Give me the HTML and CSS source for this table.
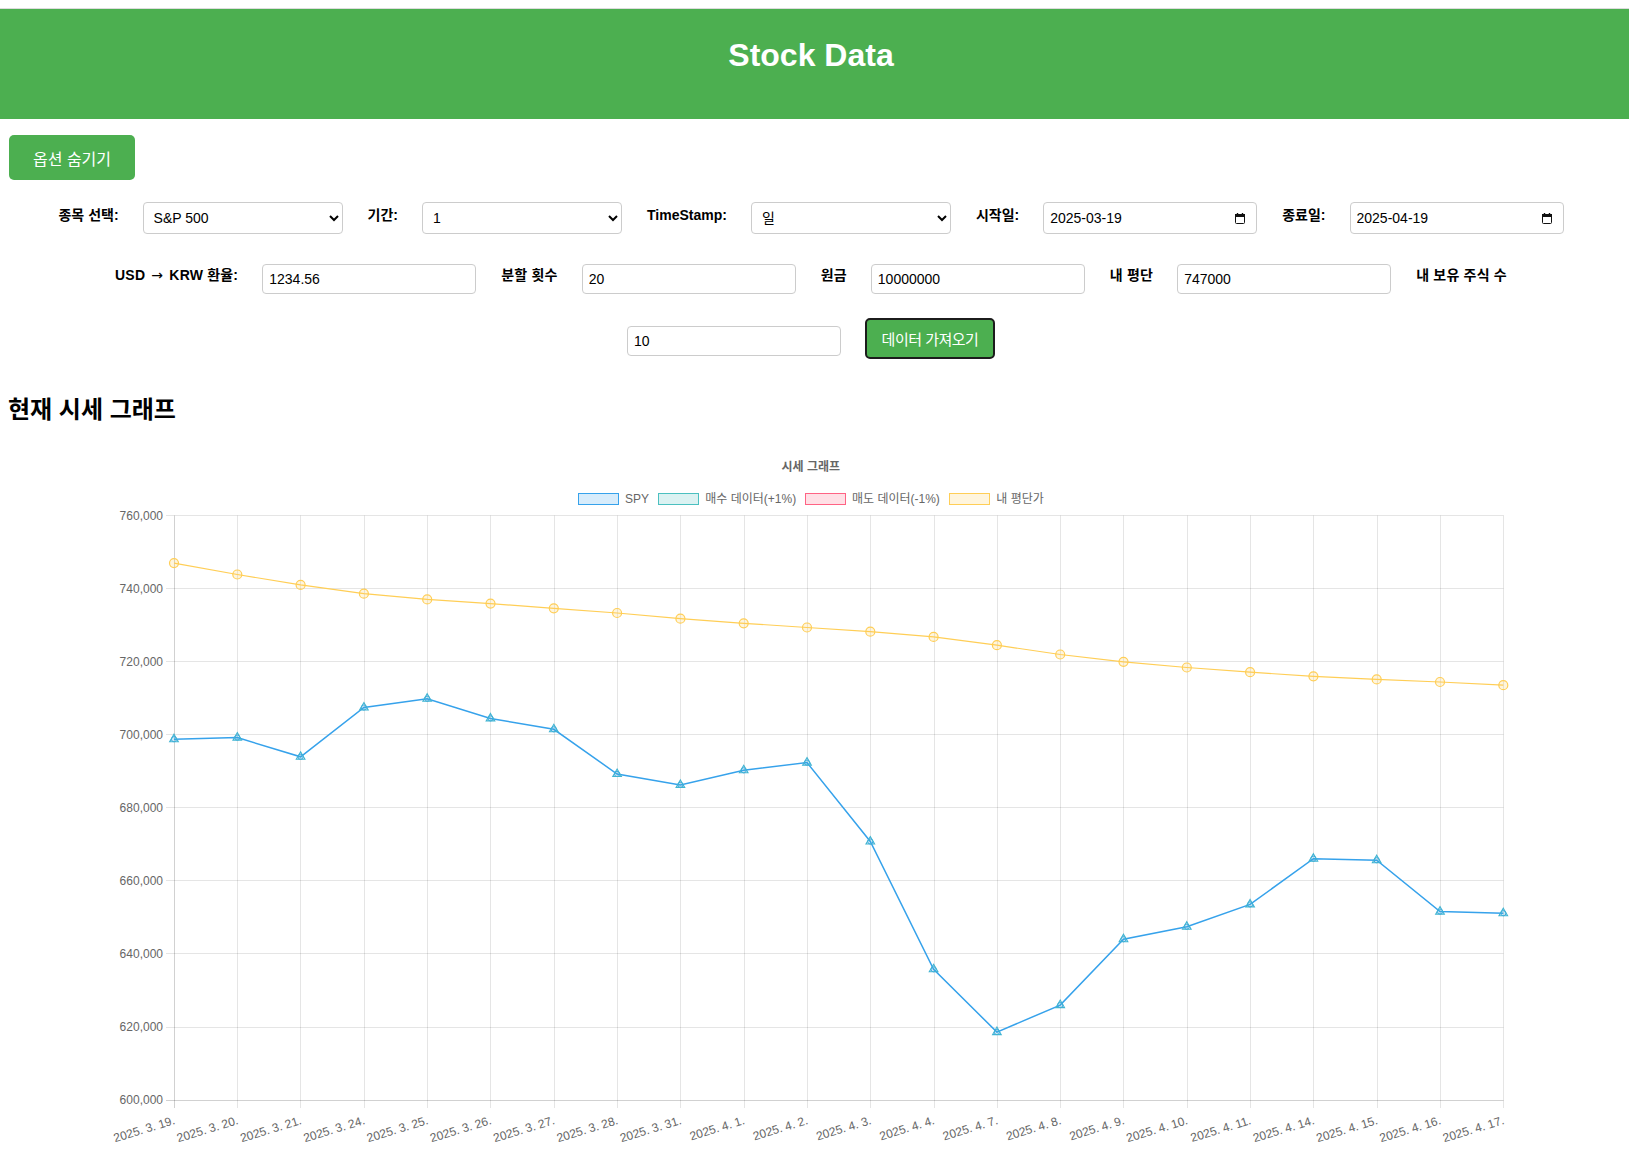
FILE: index.html
```html
<!DOCTYPE html>
<html lang="ko">
<head>
<meta charset="utf-8">
<title>Stock Data</title>
<link rel="stylesheet" href="styles.css">
</head>
<body>
<header class="site-header"><h1 class="site-title">Stock Data</h1></header>
<main class="page">
  <button class="btn toggle-btn" type="button">옵션 숨기기</button>
  <form class="options">
    <div class="row row-1">
      <div class="field"><label class="field-label">종목 선택:</label><select class="control select"><option>S&amp;P 500</option></select></div>
      <div class="field"><label class="field-label">기간:</label><select class="control select"><option>1</option></select></div>
      <div class="field"><label class="field-label">TimeStamp:</label><select class="control select"><option>일</option></select></div>
      <div class="field"><label class="field-label">시작일:</label>
        <div class="date-wrap"><input class="control input date" type="text" value="2025-03-19">
          <svg class="cal-icon" viewBox="0 0 10 11"><path d="M2.5 0V2M7.5 0V2" stroke="#111" stroke-width="1.4"/><rect x="0.5" y="1.5" width="9" height="9" rx="1" fill="none" stroke="#111"/><rect x="0" y="1" width="10" height="3" fill="#111"/></svg>
        </div>
      </div>
      <div class="field"><label class="field-label">종료일:</label>
        <div class="date-wrap"><input class="control input date" type="text" value="2025-04-19">
          <svg class="cal-icon" viewBox="0 0 10 11"><path d="M2.5 0V2M7.5 0V2" stroke="#111" stroke-width="1.4"/><rect x="0.5" y="1.5" width="9" height="9" rx="1" fill="none" stroke="#111"/><rect x="0" y="1" width="10" height="3" fill="#111"/></svg>
        </div>
      </div>
    </div>
    <div class="row row-2">
      <div class="field"><label class="field-label">USD <span class="arrow">→</span> KRW 환율:</label><input class="control input" type="text" value="1234.56"></div>
      <div class="field"><label class="field-label">분할 횟수</label><input class="control input" type="text" value="20"></div>
      <div class="field"><label class="field-label">원금</label><input class="control input" type="text" value="10000000"></div>
      <div class="field"><label class="field-label">내 평단</label><input class="control input" type="text" value="747000"></div>
      <div class="field"><label class="field-label">내 보유 주식 수</label></div>
    </div>
    <div class="row row-3">
      <input class="control input" type="text" value="10">
      <button class="btn fetch-btn" type="button">데이터 가져오기</button>
    </div>
  </form>
  <h2 class="section-title">현재 시세 그래프</h2>
  <div class="chart">
    <svg class="chart-svg" width="1613" height="700" viewBox="8 448 1613 700" xmlns="http://www.w3.org/2000/svg">
      <defs>
        <g id="pt-y"><circle r="4.5" fill="rgba(255,206,86,0.2)" stroke="rgb(255,206,86)" stroke-width="1.2"/></g>
        <g id="pt-b"><circle r="2.6" fill="rgba(54,162,235,0.15)" stroke="rgb(54,162,235)" stroke-width="1"/><path d="M0,-5L4.33,2.5L-4.33,2.5Z" fill="rgba(75,192,192,0.12)" stroke="rgb(64,180,210)" stroke-width="1.1"/></g>
      </defs>
      <text class="c-title" x="810.8" y="470.8" text-anchor="middle">시세 그래프</text>
      <g class="legend">
        <rect x="578.5" y="493.5" width="40" height="11" fill="rgba(54,162,235,0.2)" stroke="rgb(54,162,235)"/>
        <text x="625" y="503.3">SPY</text>
        <rect x="658.5" y="493.5" width="40" height="11" fill="rgba(75,192,192,0.2)" stroke="rgb(75,192,192)"/>
        <text x="705.3" y="503.3">매수 데이터(+1%)</text>
        <rect x="805.5" y="493.5" width="40" height="11" fill="rgba(255,99,132,0.2)" stroke="rgb(255,99,132)"/>
        <text x="852" y="503.3">매도 데이터(-1%)</text>
        <rect x="949.5" y="493.5" width="40" height="11" fill="rgba(255,206,86,0.2)" stroke="rgb(255,206,86)"/>
        <text x="996.3" y="503.3">내 평단가</text>
      </g>
      <path class="grid" d="M166 515.5H1503.5M166 588.5H1503.5M166 661.5H1503.5M166 734.5H1503.5M166 807.5H1503.5M166 880.5H1503.5M166 953.5H1503.5M166 1027.5H1503.5
        M237.5 515.5V1108M300.5 515.5V1108M364.5 515.5V1108M427.5 515.5V1108M490.5 515.5V1108M554.5 515.5V1108M617.5 515.5V1108M680.5 515.5V1108M744.5 515.5V1108M807.5 515.5V1108M870.5 515.5V1108M934.5 515.5V1108M997.5 515.5V1108M1060.5 515.5V1108M1123.5 515.5V1108M1187.5 515.5V1108M1250.5 515.5V1108M1313.5 515.5V1108M1377.5 515.5V1108M1440.5 515.5V1108M1503.5 515.5V1108"/>
      <path class="axis" d="M166 1100.5H1503.5M174.5 515.5V1108"/>
      <g class="y-labels" text-anchor="end">
        <text x="163" y="519.6">760,000</text>
        <text x="163" y="592.7">740,000</text>
        <text x="163" y="665.8">720,000</text>
        <text x="163" y="738.9">700,000</text>
        <text x="163" y="812">680,000</text>
        <text x="163" y="885.1">660,000</text>
        <text x="163" y="958.2">640,000</text>
        <text x="163" y="1031.3">620,000</text>
        <text x="163" y="1104.4">600,000</text>
      </g>
      <g class="x-labels" text-anchor="end">
        <text transform="translate(174.5 1120) rotate(-17)">2025. 3. 19.</text>
        <text transform="translate(237.8 1120) rotate(-17)">2025. 3. 20.</text>
        <text transform="translate(301.1 1120) rotate(-17)">2025. 3. 21.</text>
        <text transform="translate(364.4 1120) rotate(-17)">2025. 3. 24.</text>
        <text transform="translate(427.7 1120) rotate(-17)">2025. 3. 25.</text>
        <text transform="translate(491 1120) rotate(-17)">2025. 3. 26.</text>
        <text transform="translate(554.3 1120) rotate(-17)">2025. 3. 27.</text>
        <text transform="translate(617.6 1120) rotate(-17)">2025. 3. 28.</text>
        <text transform="translate(680.9 1120) rotate(-17)">2025. 3. 31.</text>
        <text transform="translate(744.2 1120) rotate(-17)">2025. 4. 1.</text>
        <text transform="translate(807.5 1120) rotate(-17)">2025. 4. 2.</text>
        <text transform="translate(870.8 1120) rotate(-17)">2025. 4. 3.</text>
        <text transform="translate(934.1 1120) rotate(-17)">2025. 4. 4.</text>
        <text transform="translate(997.4 1120) rotate(-17)">2025. 4. 7.</text>
        <text transform="translate(1060.7 1120) rotate(-17)">2025. 4. 8.</text>
        <text transform="translate(1124 1120) rotate(-17)">2025. 4. 9.</text>
        <text transform="translate(1187.3 1120) rotate(-17)">2025. 4. 10.</text>
        <text transform="translate(1250.6 1120) rotate(-17)">2025. 4. 11.</text>
        <text transform="translate(1313.9 1120) rotate(-17)">2025. 4. 14.</text>
        <text transform="translate(1377.2 1120) rotate(-17)">2025. 4. 15.</text>
        <text transform="translate(1440.5 1120) rotate(-17)">2025. 4. 16.</text>
        <text transform="translate(1503.8 1120) rotate(-17)">2025. 4. 17.</text>
      </g>
      <polyline class="line-avg" points="174,563.1 237.3,574.5 300.6,584.9 363.9,593.7 427.2,599.4 490.5,603.6 553.8,608.3 617.1,613 680.4,618.7 743.7,623.3 807,627.5 870.3,631.7 933.6,636.9 996.9,645.2 1060.2,654.5 1123.5,661.8 1186.8,667.5 1250.1,672.2 1313.4,676.3 1376.7,679.4 1440,682 1503.3,685.2"/>
      <polyline class="line-spy" points="174,739.2 237.3,737.6 300.6,756.8 363.9,707.5 427.2,698.7 490.5,718.4 553.8,729.3 617.1,774 680.4,784.9 743.7,770.3 807,762.6 870.3,841.5 933.6,969.3 996.9,1032.1 1060.2,1005.1 1123.5,939.2 1186.8,926.7 1250.1,904.4 1313.4,858.7 1376.7,860.2 1440,911.6 1503.3,913.2"/>
      <g class="pts-avg">
        <use href="#pt-y" x="174" y="563.1"/><use href="#pt-y" x="237.3" y="574.5"/><use href="#pt-y" x="300.6" y="584.9"/><use href="#pt-y" x="363.9" y="593.7"/><use href="#pt-y" x="427.2" y="599.4"/><use href="#pt-y" x="490.5" y="603.6"/><use href="#pt-y" x="553.8" y="608.3"/><use href="#pt-y" x="617.1" y="613"/><use href="#pt-y" x="680.4" y="618.7"/><use href="#pt-y" x="743.7" y="623.3"/><use href="#pt-y" x="807" y="627.5"/><use href="#pt-y" x="870.3" y="631.7"/><use href="#pt-y" x="933.6" y="636.9"/><use href="#pt-y" x="996.9" y="645.2"/><use href="#pt-y" x="1060.2" y="654.5"/><use href="#pt-y" x="1123.5" y="661.8"/><use href="#pt-y" x="1186.8" y="667.5"/><use href="#pt-y" x="1250.1" y="672.2"/><use href="#pt-y" x="1313.4" y="676.3"/><use href="#pt-y" x="1376.7" y="679.4"/><use href="#pt-y" x="1440" y="682"/><use href="#pt-y" x="1503.3" y="685.2"/>
      </g>
      <g class="pts-spy">
        <use href="#pt-b" x="174" y="739.2"/><use href="#pt-b" x="237.3" y="737.6"/><use href="#pt-b" x="300.6" y="756.8"/><use href="#pt-b" x="363.9" y="707.5"/><use href="#pt-b" x="427.2" y="698.7"/><use href="#pt-b" x="490.5" y="718.4"/><use href="#pt-b" x="553.8" y="729.3"/><use href="#pt-b" x="617.1" y="774"/><use href="#pt-b" x="680.4" y="784.9"/><use href="#pt-b" x="743.7" y="770.3"/><use href="#pt-b" x="807" y="762.6"/><use href="#pt-b" x="870.3" y="841.5"/><use href="#pt-b" x="933.6" y="969.3"/><use href="#pt-b" x="996.9" y="1032.1"/><use href="#pt-b" x="1060.2" y="1005.1"/><use href="#pt-b" x="1123.5" y="939.2"/><use href="#pt-b" x="1186.8" y="926.7"/><use href="#pt-b" x="1250.1" y="904.4"/><use href="#pt-b" x="1313.4" y="858.7"/><use href="#pt-b" x="1376.7" y="860.2"/><use href="#pt-b" x="1440" y="911.6"/><use href="#pt-b" x="1503.3" y="913.2"/>
      </g>
    </svg>
  </div>
</main>
</body>
</html>
```

FILE: styles.css
```css
* {
  box-sizing: border-box;
}

html,
body {
  margin: 0;
  padding: 0;
  background: #fff;
}

body {
  font-family: "Liberation Sans", Arial, "Noto Sans CJK KR", sans-serif;
  font-size: 14px;
  color: #000;
}

.site-header {
  margin-top: 8px;
  border-top: 1px solid #dcdcdc;
  background: #4caf50;
  padding: 28px 7px 45px 0;
  text-align: center;
}

.site-title {
  margin: 0;
  font-size: 32px;
  line-height: 37px;
  font-weight: bold;
  color: #fff;
}

.page {
  padding: 0 8px;
}

.btn {
  font-family: inherit;
  font-size: 16px;
  color: #fff;
  background: #4caf50;
  cursor: pointer;
}

.toggle-btn {
  display: block;
  margin: 16px 0 0 1px;
  height: 45px;
  padding: 0 24px;
  border: none;
  border-radius: 5px;
}

.options {
  margin: 22px 0 0;
  padding-right: 7px;
}

.row {
  display: flex;
  justify-content: center;
  align-items: flex-start;
  column-gap: 25px;
}

.row-2 {
  margin-top: 30px;
}

.row-3 {
  margin-top: 24px;
  column-gap: 24px;
}

.field {
  display: flex;
  align-items: flex-start;
  column-gap: 24px;
}

.field-label {
  font-weight: bold;
  font-size: 14px;
  line-height: 23px;
  white-space: nowrap;
}

.row-1 .field-label {
  margin-top: 2px;
}

.row-2 .field-label {
  line-height: 22px;
  letter-spacing: 0.2px;
}

.arrow {
  font-family: "DejaVu Sans", sans-serif;
  font-weight: normal;
  margin: 0 2px;
}

.control {
  font-family: inherit;
  font-size: 14px;
  color: #000;
  border: 1px solid #ccc;
  border-radius: 4px;
  background: #fff;
  padding: 0 6px;
  margin: 0;
}

.select {
  width: 200px;
  height: 32px;
}

.input {
  width: 214px;
  height: 30px;
}

.date {
  height: 32px;
}

.date-wrap {
  position: relative;
}

.cal-icon {
  position: absolute;
  right: 12px;
  top: 11px;
  width: 10px;
  height: 11px;
}

.row-3 .input {
  margin-top: 8px;
}

.fetch-btn {
  width: 130px;
  height: 41px;
  padding: 0;
  font-size: 15px;
  letter-spacing: -0.5px;
  border: 2px solid #1c1c1c;
  border-radius: 5px;
}

.section-title {
  margin: 37px 0 0;
  font-size: 24px;
  line-height: 28px;
  font-weight: bold;
}

.chart {
  margin-top: 24px;
}

.chart-svg {
  display: block;
  font-family: "Liberation Sans", Arial, "Noto Sans CJK KR", sans-serif;
  font-size: 12px;
}

.chart-svg text {
  fill: #666;
}

.chart-svg .c-title {
  font-weight: bold;
}

.x-labels text {
  dominant-baseline: central;
}

.grid {
  fill: none;
  stroke: rgba(0, 0, 0, 0.1);
  stroke-width: 1;
}

.axis {
  fill: none;
  stroke: rgba(0, 0, 0, 0.18);
  stroke-width: 1;
}

.line-avg {
  fill: none;
  stroke: rgb(255, 206, 86);
  stroke-width: 1.2;
}

.line-spy {
  fill: none;
  stroke: rgb(54, 162, 235);
  stroke-width: 1.5;
}
```
